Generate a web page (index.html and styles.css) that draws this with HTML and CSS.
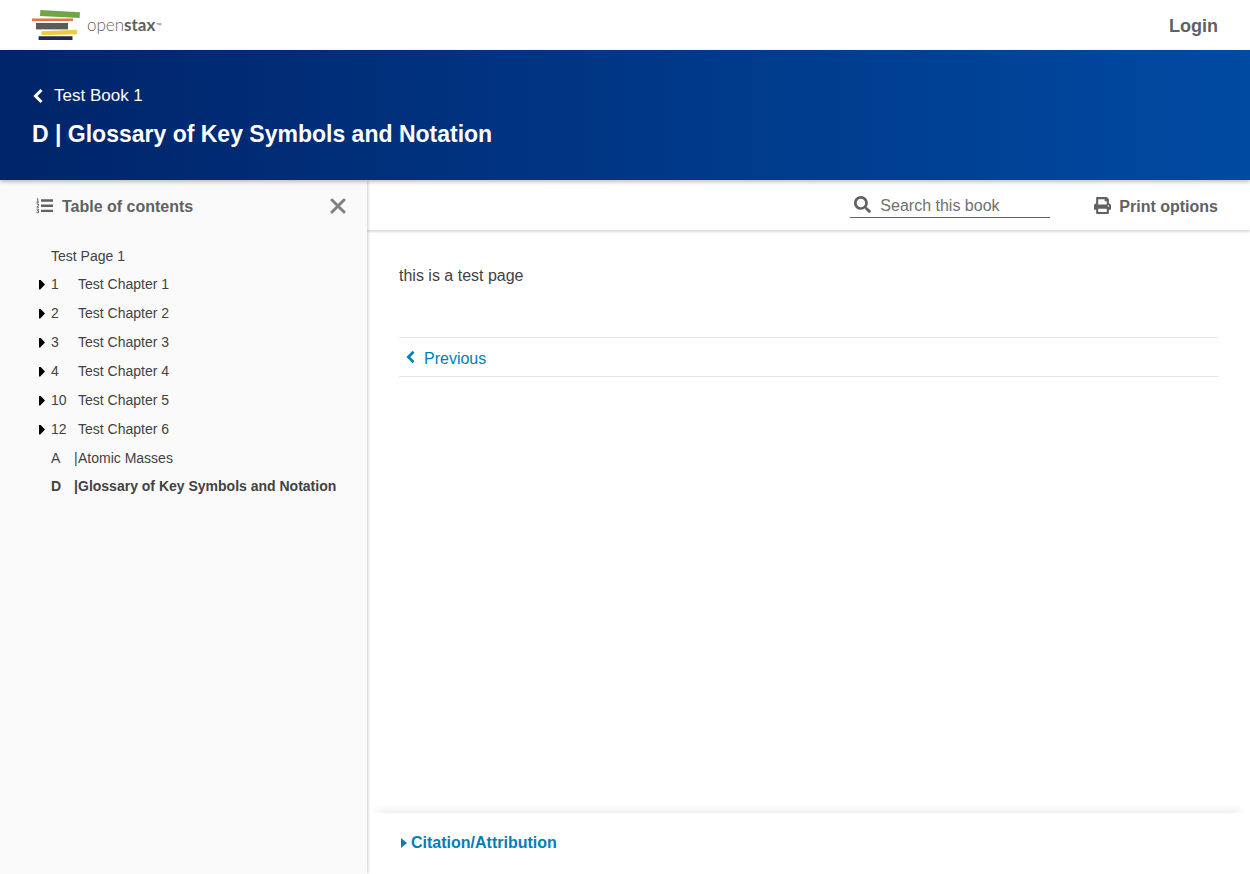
FILE: index.html
```html
<!DOCTYPE html>
<html lang="en">
<head>
<meta charset="utf-8">
<meta name="viewport" content="width=device-width, initial-scale=1">
<title>D | Glossary of Key Symbols and Notation</title>
<link rel="stylesheet" href="styles.css">
</head>
<body>
<header class="navbar">
  <a class="logo" href="#" aria-label="openstax home">
    <svg class="logo-mark" viewBox="0 0 48 31" aria-hidden="true">
      <path fill="#6fa544" d="M8.400 0 48 2.200 47.600 8 8 6z"/>
      <path fill="#e8704c" d="M0 8.600H41V11H0z"/>
      <path fill="#5b5c5a" d="M4 13H36V19.400H4z"/>
      <path fill="#f0cb40" d="M9.400 21.300 45 19.800V24.300L9.400 25.300z"/>
      <path fill="#212a52" d="M6.600 26.300H40.500V30H6.600z"/>
    </svg>
    <span class="logo-name">open<b>stax</b></span><span class="logo-tm">™</span>
  </a>
  <a class="login" href="#">Login</a>
</header>
<div class="book-banner">
  <a class="book-link" href="#">
    <svg class="chevron" viewBox="0 0 10 16" aria-hidden="true"><path d="M8.500 2 2.500 8l6 6"/></svg>
    <span>Test Book 1</span>
  </a>
  <h1 class="page-title">D | Glossary of Key Symbols and Notation</h1>
</div>
<div class="layout">
  <nav class="sidebar" aria-label="Table of contents">
    <div class="sidebar-head">
      <svg class="list-icon" viewBox="0 0 18 16" aria-hidden="true">
        <path class="list-bars" d="M5 2.500H17M5 7.700H17M5 12.900H17"/>
        <path class="list-marks" d="M.8 .8H1.800V4M.5 4.200H3M.5 6H2.500V7.400L.8 9.200H3M.5 11.200H2.500L1.500 12.600H2.500V14.700H.5"/>
      </svg>
      <h2 class="sidebar-title">Table of contents</h2>
      <button class="close" type="button" aria-label="Close table of contents">
        <svg viewBox="0 0 16 16" aria-hidden="true"><path d="M2 2 14 14M14 2 2 14"/></svg>
      </button>
    </div>
    <ol class="toc">
      <li><a class="toc-page" href="#">Test Page 1</a></li>
      <li><details class="chapter"><summary><span class="num">1</span>Test Chapter 1</summary></details></li>
      <li><details class="chapter"><summary><span class="num">2</span>Test Chapter 2</summary></details></li>
      <li><details class="chapter"><summary><span class="num">3</span>Test Chapter 3</summary></details></li>
      <li><details class="chapter"><summary><span class="num">4</span>Test Chapter 4</summary></details></li>
      <li><details class="chapter"><summary><span class="num">10</span>Test Chapter 5</summary></details></li>
      <li><details class="chapter"><summary><span class="num">12</span>Test Chapter 6</summary></details></li>
      <li><a class="toc-page" href="#"><span class="letter">A</span><span class="divider">|</span>Atomic Masses</a></li>
      <li><a class="toc-page current" href="#" aria-current="page"><span class="letter">D</span><span class="divider">|</span>Glossary of Key Symbols and Notation</a></li>
    </ol>
  </nav>
  <div class="content">
    <div class="toolbar">
      <label class="search">
        <svg class="tool-icon" viewBox="0 0 512 512" aria-hidden="true"><path d="M505 442.700L405.300 343c-4.500-4.500-10.600-7-17-7H372c27.600-35.300 44-79.700 44-128C416 93.100 322.900 0 208 0S0 93.100 0 208s93.100 208 208 208c48.300 0 92.700-16.400 128-44v16.300c0 6.400 2.500 12.500 7 17l99.700 99.700c9.400 9.400 24.600 9.400 33.900 0l28.300-28.300c9.400-9.400 9.400-24.600.1-34zM208 336c-70.700 0-128-57.200-128-128 0-70.700 57.200-128 128-128 70.700 0 128 57.200 128 128 0 70.700-57.200 128-128 128z"/></svg>
        <input class="search-input" type="text" aria-label="Search this book" placeholder="Search this book">
      </label>
      <button class="print" type="button">
        <svg class="tool-icon" viewBox="0 0 512 512" aria-hidden="true"><path d="M448 192V77.250c0-8.490-3.370-16.620-9.370-22.630L393.370 9.370c-6-6-14.140-9.370-22.630-9.370H96C78.330 0 64 14.330 64 32v160c-35.350 0-64 28.650-64 64v112c0 8.840 7.160 16 16 16h48v96c0 17.670 14.330 32 32 32h320c17.670 0 32-14.330 32-32v-96h48c8.840 0 16-7.160 16-16V256c0-35.350-28.650-64-64-64zm-64 256H128v-96h256v96zm0-224H128V64h192v48c0 8.840 7.160 16 16 16h48v96zm48 72c-13.250 0-24-10.750-24-24 0-13.260 10.750-24 24-24s24 10.740 24 24c0 13.250-10.750 24-24 24z"/></svg>
        <span>Print options</span>
      </button>
    </div>
    <main class="page">
      <p class="page-text">this is a test page</p>
      <nav class="pager" aria-label="Pages">
        <a class="previous" href="#">
          <svg class="chevron" viewBox="0 0 10 16" aria-hidden="true"><path d="M8.500 2 2.500 8l6 6"/></svg>
          <span>Previous</span>
        </a>
      </nav>
    </main>
    <details class="citation"><summary>Citation/Attribution</summary></details>
  </div>
</div>
</body>
</html>
```
FILE: styles.css
```css
* {
  box-sizing: border-box;
}

body {
  margin: 0;
  min-height: 100vh;
  display: flex;
  flex-direction: column;
  font: 16px/24px "Liberation Sans", Arial, sans-serif;
  color: #424242;
  background: #fff;
}

a {
  text-decoration: none;
  color: inherit;
}

svg {
  display: block;
  flex: none;
}

button {
  font: inherit;
  color: inherit;
  background: none;
  border: 0;
  padding: 0;
  cursor: pointer;
}

.navbar {
  display: flex;
  align-items: center;
  justify-content: space-between;
  height: 50px;
  padding: 0 32px;
}

.logo {
  display: flex;
  align-items: center;
  color: #5f6062;
}

.logo-mark {
  width: 48px;
  height: 31px;
  margin-right: 7px;
}

.logo-name {
  font: 300 17px/20px Lato, sans-serif;
}

.logo-name b {
  font-weight: 700;
}

.logo-tm {
  font-size: 6px;
  line-height: 14px;
}

.login {
  padding-top: 2px;
  font-size: 18px;
  font-weight: 700;
  color: #5f6163;
}

.book-banner {
  position: relative;
  z-index: 3;
  display: flex;
  flex-direction: column;
  justify-content: center;
  gap: 8px;
  height: 130px;
  padding: 6px 32px 0;
  color: #fff;
  background: linear-gradient(to right, #002469, #004aa2);
  box-shadow: 0 2px 4px rgba(0, 0, 0, .25);
}

.book-link {
  display: flex;
  align-items: center;
  gap: 10px;
  font-size: 17px;
}

.chevron {
  width: 12px;
  height: 16px;
  fill: none;
  stroke: currentColor;
  stroke-width: 3;
}

.page-title {
  margin: 0;
  font-size: 23px;
  line-height: 36px;
  font-weight: 700;
}

.layout {
  flex: 1;
  display: flex;
}

.sidebar {
  position: relative;
  z-index: 2;
  flex: none;
  width: 367px;
  padding: 0 21px 0 36px;
  background: #fafafa;
  box-shadow: 1px 0 3px rgba(0, 0, 0, .2);
}

.sidebar-head {
  display: flex;
  align-items: center;
  height: 52px;
  color: #5f6163;
}

.list-icon {
  width: 18px;
  height: 16px;
  fill: none;
  stroke: currentColor;
}

.list-bars {
  stroke-width: 2.4;
}

.list-marks {
  stroke-width: 1;
}

.sidebar-title {
  margin: 0 auto 0 8px;
  padding-top: 2px;
  font-size: 16px;
}

.close svg {
  width: 16px;
  height: 16px;
  fill: none;
  stroke: #818181;
  stroke-width: 3;
  stroke-linecap: round;
}

.toc {
  margin: 10px 0 0;
  padding: 0;
  list-style: none;
  font-size: 14px;
}

.toc-page {
  display: flex;
  padding-left: 15px;
  line-height: 28px;
  white-space: nowrap;
}

.current {
  font-weight: 700;
}

.letter {
  width: 23px;
}

.divider {
  width: 4px;
}

.chapter summary {
  display: flex;
  align-items: center;
  line-height: 29px;
  cursor: pointer;
}

.chapter summary::before {
  content: "";
  width: 6px;
  height: 10px;
  margin: 0 6px 0 3px;
  background: #000;
  clip-path: polygon(0 0, 20% 0, 100% 50%, 20% 100%, 0 100%);
}

.num {
  width: 27px;
}

.content {
  flex: 1;
  min-width: 0;
  display: flex;
  flex-direction: column;
}

.toolbar {
  display: flex;
  align-items: center;
  justify-content: flex-end;
  gap: 44px;
  height: 50px;
  padding: 0 32px;
  color: #5f6163;
  box-shadow: 0 2px 2px rgba(0, 0, 0, .14);
}

.search {
  display: flex;
  align-items: center;
  gap: 9px;
  width: 200px;
  height: 25px;
  padding-left: 4px;
  border-bottom: 1px solid #5f6163;
}

.tool-icon {
  width: 17px;
  height: 17px;
  fill: currentColor;
}

.search-input {
  flex: 1;
  min-width: 0;
  padding: 3px 0 0;
  border: 0;
  outline: 0;
  background: none;
  font: inherit;
  line-height: 20px;
  color: inherit;
}

.search-input::placeholder {
  color: #6f6f6f;
  opacity: 1;
}

.print {
  display: flex;
  align-items: center;
  gap: 8px;
  font-weight: 700;
}

.print span {
  padding-top: 3px;
}

.page {
  flex: 1;
  padding: 34px 32px;
}

.page-text {
  margin: 0 0 49px;
}

.pager {
  display: flex;
  height: 40px;
  padding-left: 6px;
  border: solid #e5e5e5;
  border-width: 1px 0;
  color: #027eb5;
}

.previous {
  display: flex;
  align-items: center;
  gap: 8px;
}

.previous .chevron {
  width: 11px;
  height: 14px;
}

.previous span {
  padding-top: 3px;
}

.citation {
  padding: 18px 32px 19px;
  color: #027eb5;
  font-weight: 700;
  box-shadow: 0 -10px 10px -10px rgba(0, 0, 0, .12);
}

.citation summary {
  display: flex;
  align-items: center;
  gap: 4px;
  cursor: pointer;
}

.citation summary::before {
  content: "";
  width: 6px;
  height: 10px;
  margin-left: 2px;
  background: currentColor;
  clip-path: polygon(0 0, 100% 50%, 0 100%);
}
```
